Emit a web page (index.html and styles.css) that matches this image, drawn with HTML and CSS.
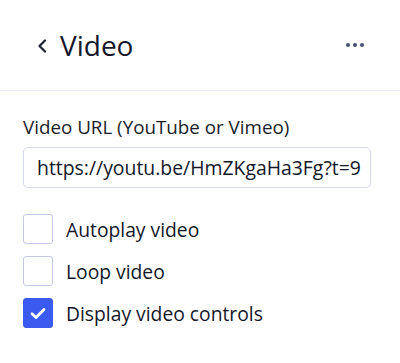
FILE: index.html
```html
<!DOCTYPE html>
<html>
<head>
<meta charset="utf-8">
<link rel="stylesheet" href="styles.css">
</head>
<body>
<div class="panel">
  <header class="header">
    <div class="title-wrap">
      <svg class="back" width="12" height="14" viewBox="0 0 12 14"><path d="M9 1.5 L3.5 7 L9 12.5" fill="none" stroke="#1d2233" stroke-width="2.2" stroke-linecap="round" stroke-linejoin="round"/></svg>
      <h1 class="title">Video</h1>
    </div>
    <div class="more"><span></span><span></span><span></span></div>
  </header>
  <div class="body">
    <label class="label">Video URL (YouTube or Vimeo)</label>
    <div class="input"><span>https://youtu.be/HmZKgaHa3Fg?t=9</span></div>
    <div class="checks">
      <div class="check"><span class="box"></span><span class="text">Autoplay video</span></div>
      <div class="check"><span class="box"></span><span class="text">Loop video</span></div>
      <div class="check"><span class="box on"><svg width="16" height="13" viewBox="0 0 16 13"><path d="M2 6.8 L6 10.6 L14 2.4" fill="none" stroke="#fff" stroke-width="2.8" stroke-linecap="round" stroke-linejoin="round"/></svg></span><span class="text">Display video controls</span></div>
    </div>
  </div>
</div>
</body>
</html>
```
FILE: styles.css
```css
* { box-sizing: border-box; }
html, body { margin: 0; padding: 0; background: #fff; }
body { font-family: "Open Sans", "Noto Sans", sans-serif; color: #14172a; }
.panel { width: 400px; height: 363px; }
.header { height: 91px; display: flex; align-items: center; justify-content: space-between; padding: 0 36px 0 36px; border-bottom: 1px solid #ebe9f7; }
.title-wrap { display: flex; align-items: center; gap: 12px; }
.back { display: block; margin-top: 2px; }
.title { margin: 0; font-size: 28px; font-weight: 400; line-height: 1; color: #14172a; }
.more { display: flex; gap: 3px; }
.more span { width: 4px; height: 4px; border-radius: 50%; background: #4a5070; }
.body { padding: 23px 23px 0 23px; }
.label { display: block; font-size: 18.8px; line-height: 26px; color: #1a1d2b; margin-bottom: 7px; }
.input { width: 348px; height: 41px; border: 1px solid #d6d9ee; border-radius: 5px; padding: 0 0 0 13px; display: flex; align-items: center; overflow: hidden; white-space: nowrap; font-size: 19.4px; }
.input span { display: block; overflow: hidden; width: 332px; }
.checks { display: flex; flex-direction: column; gap: 12px; margin-top: 26px; }
.check { display: flex; align-items: center; gap: 13px; font-size: 19.3px; }
.box { width: 30px; height: 30px; border: 1.5px solid #c3c6e4; border-radius: 3px; display: flex; align-items: center; justify-content: center; flex: none; }
.box.on { background: #3a5af0; border-color: #3a5af0; }
```
